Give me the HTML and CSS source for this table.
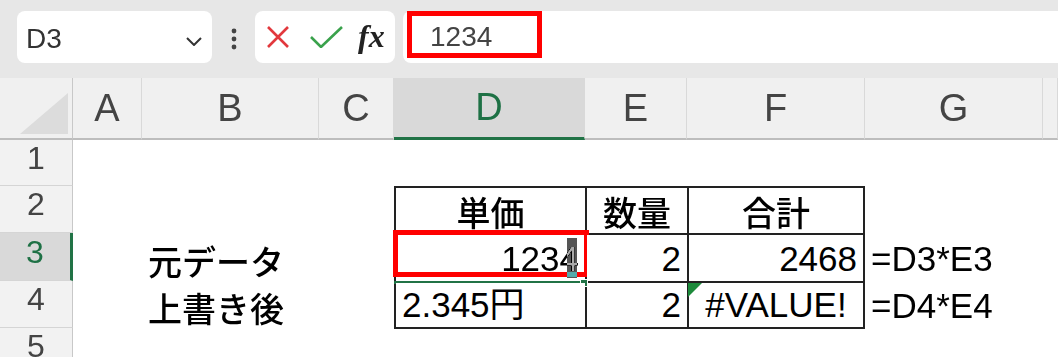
FILE: index.html
```html
<!DOCTYPE html>
<html lang="ja">
<head>
    <meta charset="UTF-8">
    <meta name="viewport" content="width=device-width, initial-scale=1.0">
    <title>単価シート</title>
    <link rel="stylesheet" href="styles.css">
</head>
<body>
    <!-- name box, formula buttons and the formula input -->
    <div class="formula-bar">
        <div class="name-box">
            <span>D3</span>
            <svg class="chevron" width="16" height="9" viewBox="0 0 16 9">
                <path d="M1 1 L8 8 L15 1" fill="none" stroke="#333" stroke-width="2"/>
            </svg>
        </div>
        <div class="kebab">
            <svg width="6" height="22" viewBox="0 0 6 22">
                <circle cx="3" cy="3" r="2.4" fill="#444"/>
                <circle cx="3" cy="11" r="2.4" fill="#444"/>
                <circle cx="3" cy="19" r="2.4" fill="#444"/>
            </svg>
        </div>
        <div class="fx-box">
            <svg class="btn-cancel" width="24" height="22" viewBox="0 0 24 22">
                <path d="M2 1 L22 21 M22 1 L2 21" stroke="#e2383d" stroke-width="2.6" fill="none"/>
            </svg>
            <svg class="btn-enter" width="33" height="22" viewBox="0 0 33 22">
                <path d="M1 11 L11 21 L32 1" stroke="#3aa24c" stroke-width="2.6" fill="none"/>
            </svg>
            <span class="fx">fx</span>
        </div>
        <div class="formula-input">
            <span>1234</span>
            <div class="mark"></div>
        </div>
    </div>

    <!-- worksheet -->
    <div class="sheet">
        <div class="corner"></div>
        <div class="col-head">A</div>
        <div class="col-head">B</div>
        <div class="col-head">C</div>
        <div class="col-head active">D</div>
        <div class="col-head">E</div>
        <div class="col-head">F</div>
        <div class="col-head">G</div>
        <div class="col-head"></div>

        <div class="row-head r1">1</div>
        <div class="row-head r2">2</div>
        <div class="row-head r3 active">3</div>
        <div class="row-head r4">4</div>
        <div class="row-head r5">5</div>

        <div class="label r3">元データ</div>
        <div class="label r4">上書き後</div>

        <div class="price-table">
            <div class="cell head">単価</div>
            <div class="cell head">数量</div>
            <div class="cell head">合計</div>

            <div class="cell num editing">
                1234
                <div class="mark"></div>
                <div class="select-line"></div>
                <div class="fill-handle"></div>
                <div class="caret"></div>
            </div>
            <div class="cell num">2</div>
            <div class="cell num">2468</div>

            <div class="cell">2.345円</div>
            <div class="cell num">2</div>
            <div class="cell error">
                <div class="flag"></div>
                #VALUE!
            </div>
        </div>

        <div class="note r3">=D3*E3</div>
        <div class="note r4">=D4*E4</div>
    </div>
</body>
</html>
```

FILE: styles.css
```css
body {
    margin: 0;
    width: 1058px;
    height: 357px;
    overflow: hidden;
    background: #fff;
    font-family: "Liberation Sans", "Noto Sans CJK JP", sans-serif;
}

/* ---- formula bar ---- */
.formula-bar {
    display: flex;
    align-items: flex-start;
    height: 78px;
    padding: 11px 0 0 17px;
    box-sizing: border-box;
    background: #e7e7e7;
}

.name-box {
    width: 195px;
    height: 52px;
    padding: 14px 10px 0 9px;
    box-sizing: border-box;
    display: flex;
    justify-content: space-between;
    background: #fff;
    border-radius: 8px;
    font-size: 28px;
    line-height: 28px;
    color: #333;
}

.chevron {
    margin-top: 12px;
}

.kebab {
    width: 43px;
    padding-top: 17px;
    display: flex;
    justify-content: center;
}

.fx-box {
    width: 140px;
    height: 52px;
    padding-left: 11px;
    box-sizing: border-box;
    display: flex;
    align-items: center;
    background: #fff;
    border-radius: 8px;
}

.btn-enter {
    margin-left: 20px;
}

.fx {
    margin-left: 15px;
    margin-top: -2px;
    font-family: "Liberation Serif", serif;
    font-style: italic;
    font-weight: bold;
    font-size: 32px;
    color: #222;
}

.formula-input {
    position: relative;
    flex: 1;
    height: 52px;
    margin-left: 8px;
    padding: 12px 0 0 27px;
    box-sizing: border-box;
    background: #fff;
    border-radius: 8px 0 0 8px;
    font-size: 28px;
    line-height: 28px;
    color: #444;
}

.formula-input .mark {
    position: absolute;
    left: 4px;
    top: 0;
    width: 135px;
    height: 47px;
    border: 5px solid #f00;
    box-sizing: border-box;
}

/* ---- worksheet grid ---- */
.sheet {
    display: grid;
    grid-template-columns: 73px 69px 177px 75px 191px 102px 178px 178px 1fr;
    grid-template-rows: 62px 46px 47px 48px 47px 1fr;
    height: 279px;
}

.corner {
    position: relative;
    background: #f0f0f0;
    border-right: 1px solid #c8c8c8;
    border-bottom: 2px solid #bdbdbd;
}

.corner::after {
    content: "";
    position: absolute;
    right: 4px;
    bottom: 4px;
    border-bottom: 41px solid #dcdcdc;
    border-left: 48px solid transparent;
}

.col-head {
    display: flex;
    align-items: center;
    justify-content: center;
    background: #f0f0f0;
    border-right: 1px solid #d9d9d9;
    border-bottom: 2px solid #bdbdbd;
    font-size: 38px;
    color: #444;
}

.col-head.active {
    background: #d9d9d9;
    color: #1e7145;
    border-bottom: 3px solid #217346;
}

.row-head {
    grid-column: 1;
    display: flex;
    align-items: center;
    justify-content: center;
    padding-bottom: 9px;
    box-sizing: border-box;
    background: #f2f2f2;
    border-right: 1px solid #c8c8c8;
    border-bottom: 1px solid #d5d5d5;
    font-size: 32px;
    color: #444;
}

.row-head.active {
    background: #d9d9d9;
    color: #1e7145;
    border-right: 3px solid #217346;
}

.r1 { grid-row: 2; }
.r2 { grid-row: 3; }
.r3 { grid-row: 4; }
.r4 { grid-row: 5; }
.r5 { grid-row: 6; }

.label {
    grid-column: 3;
    display: flex;
    align-items: flex-end;
    padding: 0 0 3px 6px;
    font-family: "Noto Sans CJK JP", sans-serif;
    font-weight: 500;
    font-size: 34px;
    line-height: 34px;
    color: #000;
}

.note {
    grid-column: 8;
    display: flex;
    align-items: flex-end;
    padding: 0 0 5px 6px;
    font-size: 35px;
    line-height: 35px;
    color: #000;
}

/* bordered block D2:F4 */
.price-table {
    grid-column: 5 / 8;
    grid-row: 3 / 6;
    align-self: start;
    height: 143px;
    display: grid;
    grid-template-columns: 189px 100px 174px;
    grid-template-rows: 45px 46px 44px;
    gap: 2px;
    padding: 2px;
    box-sizing: border-box;
    background: #222;
}

.cell {
    position: relative;
    display: flex;
    align-items: flex-end;
    padding: 0 6px 5px;
    background: #fff;
    font-size: 35px;
    line-height: 35px;
    color: #000;
}

.cell.num {
    justify-content: flex-end;
}

.cell.head {
    justify-content: center;
    padding-bottom: 4px;
    font-family: "Noto Sans CJK JP", sans-serif;
    font-weight: 500;
    font-size: 34px;
}

.cell.error {
    justify-content: center;
}

.cell .mark {
    position: absolute;
    left: -3px;
    top: -5px;
    width: 196px;
    height: 47px;
    border: 5px solid #f00;
    box-sizing: border-box;
}

.select-line {
    position: absolute;
    left: -2px;
    bottom: -3px;
    width: 189px;
    height: 3px;
    background: #217346;
}

.fill-handle {
    position: absolute;
    left: 184px;
    bottom: -6px;
    width: 6px;
    height: 6px;
    background: #217346;
    border: 1px solid #fff;
}

.caret {
    position: absolute;
    left: 171px;
    top: 3px;
    width: 10px;
    height: 40px;
    background: #aaa;
    mix-blend-mode: difference;
}

.flag {
    position: absolute;
    left: -1px;
    top: 0;
    border-top: 14px solid #1d8a3b;
    border-right: 14px solid transparent;
}
```
